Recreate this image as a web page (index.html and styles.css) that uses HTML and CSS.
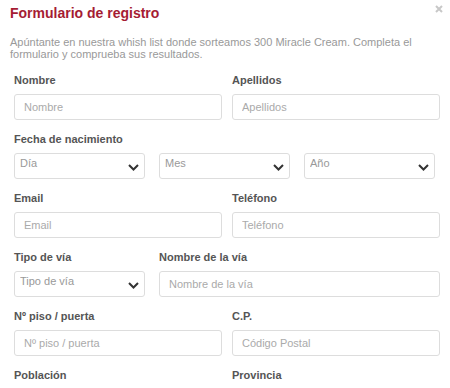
FILE: index.html
```html
<!DOCTYPE html>
<html lang="es">
<head>
    <meta charset="UTF-8">
    <meta name="viewport" content="width=device-width, initial-scale=1.0">
    <title>Formulario de registro</title>
    <link rel="stylesheet" href="styles.css">
</head>
<body>
    <div class="modal">
        <!-- Header -->
        <div class="modal-header">
            <h2 class="modal-title">Formulario de registro</h2>
            <button class="close-btn" aria-label="Cerrar">
                <svg width="8" height="8" viewBox="0 0 8 8"><path d="M1 1L7 7M7 1L1 7" stroke="#c8c8c8" stroke-width="2"/></svg>
            </button>
        </div>
        <p class="intro">Apúntante en nuestra whish list donde sorteamos 300 Miracle Cream. Completa el formulario y comprueba sus resultados.</p>

        <!-- Form -->
        <form class="form">
            <div class="row two-cols">
                <div class="field">
                    <label>Nombre</label>
                    <input type="text" placeholder="Nombre">
                </div>
                <div class="field">
                    <label>Apellidos</label>
                    <input type="text" placeholder="Apellidos">
                </div>
            </div>

            <div class="field">
                <label>Fecha de nacimiento</label>
                <div class="row three-cols">
                    <div class="select-wrap">
                        <select><option>Día</option></select>
                        <svg class="chevron" width="11" height="7" viewBox="0 0 11 7"><path d="M1 1L5.5 5.5L10 1" fill="none" stroke="#333" stroke-width="2"/></svg>
                    </div>
                    <div class="select-wrap">
                        <select><option>Mes</option></select>
                        <svg class="chevron" width="11" height="7" viewBox="0 0 11 7"><path d="M1 1L5.5 5.5L10 1" fill="none" stroke="#333" stroke-width="2"/></svg>
                    </div>
                    <div class="select-wrap">
                        <select><option>Año</option></select>
                        <svg class="chevron" width="11" height="7" viewBox="0 0 11 7"><path d="M1 1L5.5 5.5L10 1" fill="none" stroke="#333" stroke-width="2"/></svg>
                    </div>
                </div>
            </div>

            <div class="row two-cols">
                <div class="field">
                    <label>Email</label>
                    <input type="email" placeholder="Email">
                </div>
                <div class="field">
                    <label>Teléfono</label>
                    <input type="tel" placeholder="Teléfono">
                </div>
            </div>

            <div class="row address">
                <div class="field">
                    <label>Tipo de vía</label>
                    <div class="select-wrap">
                        <select><option>Tipo de vía</option></select>
                        <svg class="chevron" width="11" height="7" viewBox="0 0 11 7"><path d="M1 1L5.5 5.5L10 1" fill="none" stroke="#333" stroke-width="2"/></svg>
                    </div>
                </div>
                <div class="field">
                    <label>Nombre de la vía</label>
                    <input type="text" placeholder="Nombre de la vía">
                </div>
            </div>

            <div class="row two-cols">
                <div class="field">
                    <label>Nº piso / puerta</label>
                    <input type="text" placeholder="Nº piso / puerta">
                </div>
                <div class="field">
                    <label>C.P.</label>
                    <input type="text" placeholder="Código Postal">
                </div>
            </div>

            <div class="row two-cols">
                <div class="field">
                    <label>Población</label>
                    <input type="text" placeholder="Población">
                </div>
                <div class="field">
                    <label>Provincia</label>
                    <input type="text" placeholder="Provincia">
                </div>
            </div>
        </form>
    </div>
</body>
</html>
```
FILE: styles.css
```css
body {
    margin: 0;
    padding: 0;
    background-color: #fff;
    font-family: "Liberation Sans", Arial, sans-serif;
}
.modal {
    width: 450px;
    height: 388px;
    overflow: hidden;
}
.modal-header {
    display: flex;
    justify-content: space-between;
    align-items: flex-start;
    padding: 5px 7px 0 10px;
}
.modal-title {
    margin: 0;
    font-size: 14px;
    line-height: 16px;
    font-weight: bold;
    color: #a51c33;
}
.close-btn {
    background: none;
    border: none;
    padding: 0;
    margin-top: 0;
    line-height: 0;
    cursor: pointer;
}
.intro {
    margin: 15px 0 0 10px;
    max-width: 420px;
    font-size: 11px;
    line-height: 12px;
    color: #999;
}
.form {
    padding: 14px 10px 0 14px;
}
.row {
    display: grid;
}
.two-cols {
    grid-template-columns: 1fr 1fr;
    column-gap: 10px;
}
.three-cols {
    grid-template-columns: repeat(3, 131px);
    column-gap: 14px;
}
.address {
    grid-template-columns: 131px 1fr;
    column-gap: 14px;
}
.field {
    margin-bottom: 13px;
}
.field label {
    display: block;
    font-size: 11px;
    line-height: 13px;
    font-weight: bold;
    color: #555;
    margin-bottom: 7px;
}
.field input {
    display: block;
    width: 100%;
    height: 26px;
    box-sizing: border-box;
    padding: 0 9px;
    border: 1px solid #ddd;
    border-radius: 3px;
    font-family: inherit;
    font-size: 11px;
    color: #555;
    background: #fff;
}
.field input::placeholder {
    color: #aaa;
}
.select-wrap {
    position: relative;
}
.select-wrap select {
    display: block;
    width: 100%;
    height: 26px;
    box-sizing: border-box;
    padding: 0 20px 6px 5px;
    border: 1px solid #ddd;
    border-radius: 3px;
    font-family: inherit;
    font-size: 11px;
    color: #999;
    background: #fff;
    appearance: none;
    -webkit-appearance: none;
}
.chevron {
    position: absolute;
    right: 6px;
    top: 11px;
    pointer-events: none;
}
```
